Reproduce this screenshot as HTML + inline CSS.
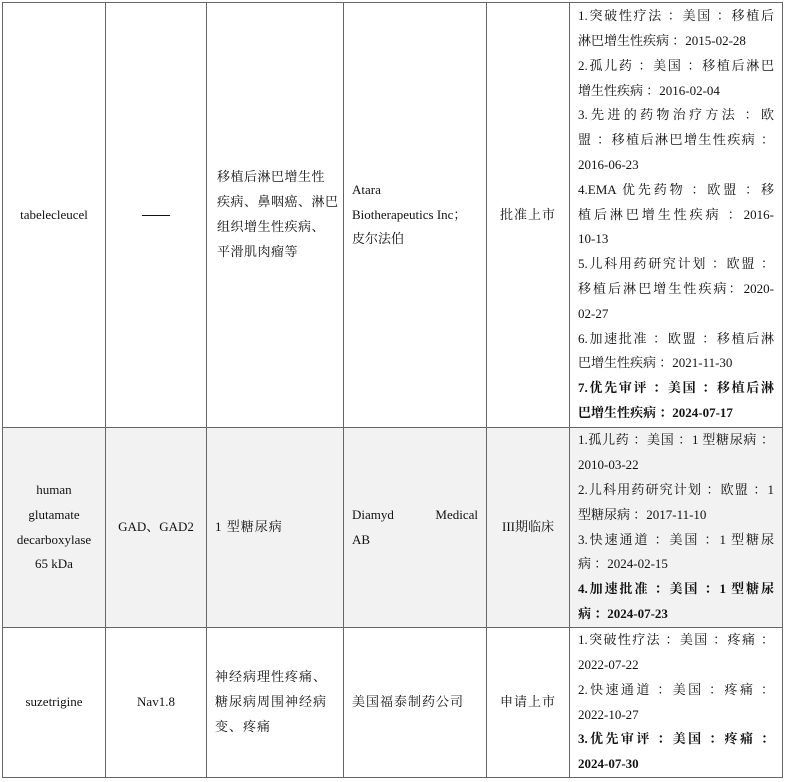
<!DOCTYPE html>
<html><head><meta charset="utf-8"><style>
body{margin:0;width:786px;height:782px;background:#fff;overflow:hidden;font-family:"Liberation Serif","Noto Serif CJK SC",serif;font-size:13px;color:#111;position:relative}
.c{position:absolute;display:flex;align-items:center;box-sizing:border-box;padding:0 8px;line-height:24.8px;border-left:1px solid #666;border-top:1px solid #666}
.cen{justify-content:center;text-align:center}
.j{text-align:justify;text-align-last:justify}
b{font-weight:bold}
.g{background:#f2f2f2}
</style></head><body>
<!-- row 1 -->
<div class="c cen" style="left:2px;top:2px;width:103px;height:425px">tabelecleucel</div>
<div class="c cen" style="left:105px;top:2px;width:101px;height:425px"><span style="display:inline-block;width:28px;border-top:1px solid #111"></span></div>
<div class="c" style="left:206px;top:2px;width:137px;height:425px;letter-spacing:0.5px;white-space:nowrap;padding-left:10px">移植后淋巴增生性<br>疾病、鼻咽癌、淋巴<br>组织增生性疾病、<br>平滑肌肉瘤等</div>
<div class="c" style="left:343px;top:2px;width:143px;height:425px">Atara<br>Biotherapeutics Inc；<br>皮尔法伯</div>
<div class="c cen" style="left:486px;top:2px;width:83px;height:425px;letter-spacing:1px">批准上市</div>
<div class="c" style="left:569px;top:2px;width:214px;height:425px;border-right:1px solid #666"><div style="width:100%">
<div class="j">1.突破性疗法 ：美国 ：移植后</div><div>淋巴增生性疾病 ：2015-02-28</div>
<div class="j">2.孤儿药 ：美国 ：移植后淋巴</div><div>增生性疾病 ：2016-02-04</div>
<div class="j">3.先进的药物治疗方法 ：欧</div><div class="j">盟 ：移植后淋巴增生性疾病 ：</div><div>2016-06-23</div>
<div class="j">4.EMA 优先药物 ：欧盟 ：移</div><div class="j">植后淋巴增生性疾病 ：2016-</div><div>10-13</div>
<div class="j">5.儿科用药研究计划 ：欧盟 ：</div><div class="j">移植后淋巴增生性疾病：2020-</div><div>02-27</div>
<div class="j">6.加速批准 ：欧盟 ：移植后淋</div><div>巴增生性疾病 ：2021-11-30</div>
<div class="j"><b>7.优先审评 ：美国 ：移植后淋</b></div><div><b>巴增生性疾病 ：2024-07-17</b></div>
</div></div>
<!-- row 2 -->
<div class="c cen g" style="left:2px;top:427px;width:103px;height:200px">human<br>glutamate<br>decarboxylase<br>65 kDa</div>
<div class="c cen g" style="left:105px;top:427px;width:101px;height:200px;padding:0 4px">GAD、GAD2</div>
<div class="c g" style="left:206px;top:427px;width:137px;height:200px;letter-spacing:1px">1 型糖尿病</div>
<div class="c g" style="left:343px;top:427px;width:143px;height:200px"><div style="width:100%"><div class="j">Diamyd Medical</div><div>AB</div></div></div>
<div class="c cen g" style="left:486px;top:427px;width:83px;height:200px">III期临床</div>
<div class="c g" style="left:569px;top:427px;width:214px;height:200px;border-right:1px solid #666"><div style="width:100%">
<div class="j">1.孤儿药 ：美国 ：1 型糖尿病 ：</div><div>2010-03-22</div>
<div class="j">2.儿科用药研究计划 ：欧盟 ：1</div><div>型糖尿病 ：2017-11-10</div>
<div class="j">3.快速通道 ：美国 ：1 型糖尿</div><div>病 ：2024-02-15</div>
<div class="j"><b>4.加速批准 ：美国 ：1 型糖尿</b></div><div><b>病 ：2024-07-23</b></div>
</div></div>
<!-- row 3 -->
<div class="c cen" style="left:2px;top:627px;width:103px;height:151px;border-bottom:1px solid #666">suzetrigine</div>
<div class="c cen" style="left:105px;top:627px;width:101px;height:151px;border-bottom:1px solid #666">Nav1.8</div>
<div class="c" style="left:206px;top:627px;width:137px;height:151px;border-bottom:1px solid #666;letter-spacing:1px">神经病理性疼痛、<br>糖尿病周围神经病<br>变、疼痛</div>
<div class="c" style="left:343px;top:627px;width:143px;height:151px;border-bottom:1px solid #666;letter-spacing:1px">美国福泰制药公司</div>
<div class="c cen" style="left:486px;top:627px;width:83px;height:151px;border-bottom:1px solid #666;letter-spacing:1px">申请上市</div>
<div class="c" style="left:569px;top:627px;width:214px;height:151px;border-right:1px solid #666;border-bottom:1px solid #666"><div style="width:100%">
<div class="j">1.突破性疗法 ：美国 ：疼痛 ：</div><div>2022-07-22</div>
<div class="j">2.快速通道 ：美国 ：疼痛 ：</div><div>2022-10-27</div>
<div class="j"><b>3.优先审评 ：美国 ：疼痛 ：</b></div><div><b>2024-07-30</b></div>
</div></div>
</body></html>
